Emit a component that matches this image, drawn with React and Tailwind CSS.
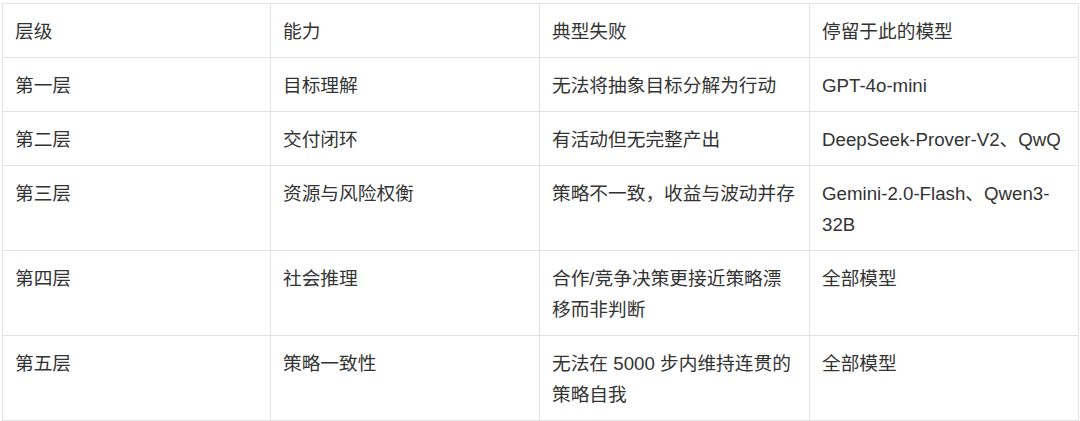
import React from "react";

const rows = [
  ["第一层", "目标理解", ["无法将抽象目标分解为行动"], ["GPT-4o-mini"]],
  ["第二层", "交付闭环", ["有活动但无完整产出"], ["DeepSeek-Prover-V2、QwQ"]],
  ["第三层", "资源与风险权衡", ["策略不一致，收益与波动并存"], ["Gemini-2.0-Flash、Qwen3-", "32B"]],
  ["第四层", "社会推理", ["合作/竞争决策更接近策略漂", "移而非判断"], ["全部模型"]],
  ["第五层", "策略一致性", ["无法在 5000 步内维持连贯的", "策略自我"], ["全部模型"]],
];

function Lines({ lines }) {
  return lines.map((l, i) => (
    <React.Fragment key={i}>
      {i > 0 && <br />}
      {l}
    </React.Fragment>
  ));
}

export default function App() {
  const cell =
    "border border-[#e2e2e2] px-[12px] pt-[11.5px] pb-[10.5px] align-top text-left font-normal whitespace-nowrap";
  return (
    <div
      className="w-[1080px] h-[421px] bg-white pt-[3px] pl-[2px] text-[#333333] text-[18.7px] leading-[31px]"
      style={{ fontFamily: '"Liberation Sans", "Noto Sans CJK SC", sans-serif' }}
    >
      <table className="w-[1076px] table-fixed border-collapse">
        <colgroup>
          <col className="w-[268px]" />
          <col className="w-[269px]" />
          <col className="w-[270px]" />
          <col className="w-[269px]" />
        </colgroup>
        <thead>
          <tr>
            <th className={cell}>层级</th>
            <th className={cell}>能力</th>
            <th className={cell}>典型失败</th>
            <th className={cell}>停留于此的模型</th>
          </tr>
        </thead>
        <tbody>
          {rows.map((r, i) => (
            <tr key={i}>
              <td className={cell}>{r[0]}</td>
              <td className={cell}>{r[1]}</td>
              <td className={cell}>
                <Lines lines={r[2]} />
              </td>
              <td className={cell}>
                <Lines lines={r[3]} />
              </td>
            </tr>
          ))}
        </tbody>
      </table>
    </div>
  );
}
